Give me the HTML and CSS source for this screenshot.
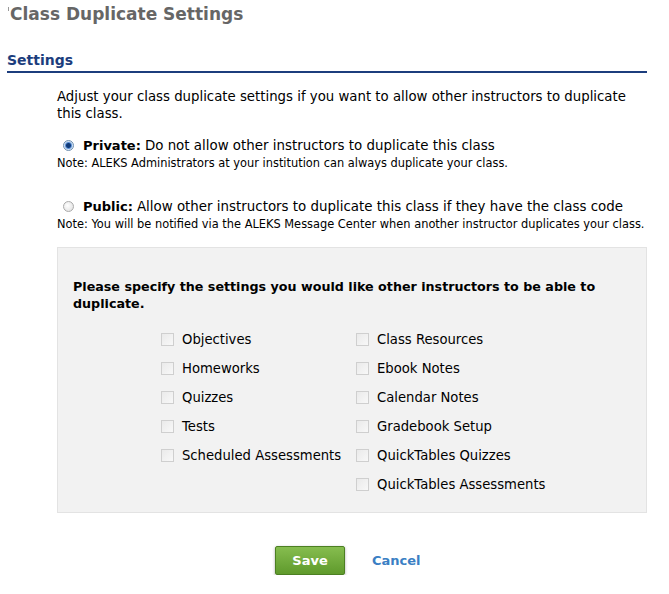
FILE: index.html
```html
<!DOCTYPE html>
<html>
<head>
<meta charset="utf-8">
<link rel="stylesheet" href="styles.css">
</head>
<body>
<div class="page">
  <h1 class="title"><span class="tick"></span>Class Duplicate Settings</h1>
  <h2 class="section">Settings</h2>
  <div class="content">
    <p class="intro">Adjust your class duplicate settings if you want to allow other instructors to duplicate this class.</p>
    <div class="option">
      <label class="opt-line"><span class="radio checked"></span><b>Private:</b> Do not allow other instructors to duplicate this class</label>
      <div class="note">Note: ALEKS Administrators at your institution can always duplicate your class.</div>
    </div>
    <div class="option public">
      <label class="opt-line"><span class="radio"></span><b>Public:</b> Allow other instructors to duplicate this class if they have the class code</label>
      <div class="note">Note: You will be notified via the ALEKS Message Center when another instructor duplicates your class.</div>
    </div>
    <div class="box">
      <p class="box-head">Please specify the settings you would like other instructors to be able to duplicate.</p>
      <div class="grid">
        <div class="col first">
          <div class="item"><span class="cb"></span>Objectives</div>
          <div class="item"><span class="cb"></span>Homeworks</div>
          <div class="item"><span class="cb"></span>Quizzes</div>
          <div class="item"><span class="cb"></span>Tests</div>
          <div class="item"><span class="cb"></span>Scheduled Assessments</div>
        </div>
        <div class="col">
          <div class="item"><span class="cb"></span>Class Resources</div>
          <div class="item"><span class="cb"></span>Ebook Notes</div>
          <div class="item"><span class="cb"></span>Calendar Notes</div>
          <div class="item"><span class="cb"></span>Gradebook Setup</div>
          <div class="item"><span class="cb"></span>QuickTables Quizzes</div>
          <div class="item"><span class="cb"></span>QuickTables Assessments</div>
        </div>
      </div>
    </div>
    <div class="actions">
      <button class="save">Save</button>
      <a class="cancel" href="#">Cancel</a>
    </div>
  </div>
</div>
</body>
</html>
```
FILE: styles.css
```css
html, body { margin: 0; padding: 0; background: #fff; }
body { font-family: "DejaVu Sans", Verdana, sans-serif; color: #000; }
.page { width: 669px; }
.title {
  margin: 0; padding: 3px 0 0 8px; height: 26px;
  font-size: 17px; font-weight: bold; color: #666; line-height: 22px;
  display: flex; align-items: flex-start;
}
.tick { width: 1px; height: 4px; background: #999; margin: 4px 1px 0 0; }
.section {
  margin: 22px 22px 0 7px; padding: 0 0 2px 0;
  font-size: 14px; font-weight: bold; color: #1c3d7d; line-height: 18px;
  border-bottom: 2px solid #1c3d7d;
}
.content { padding: 15px 22px 0 57px; }
.intro { margin: 0; font-size: 13.3px; line-height: 17px; }
.option { margin-top: 14px; }
.public { margin-top: 26px; }
.opt-line { display: flex; align-items: center; font-size: 13.4px; line-height: 19px; padding-left: 6px; }
.opt-line b { margin-right: 4px; font-size: 13px; }
.radio {
  width: 11px; height: 11px; border-radius: 50%; margin-right: 9px;
  border: 1px solid #aaa; background: radial-gradient(circle at 40% 40%, #fff, #ddd);
  box-sizing: border-box; display: inline-block; flex: none;
}
.radio.checked {
  border-color: #6d8fb0;
  background: radial-gradient(circle, #0f3a78 0 2px, #5b8fd6 3px, #cfe0f3 4px, #e8eef5 5px);
}
.note { font-size: 11.4px; line-height: 16px; }
.box {
  margin-top: 15px; background: #f2f2f2; border: 1px solid #e3e3e3;
  padding: 30px 0 13px 15px;
}
.box-head { margin: 0 20px 0 0; font-size: 12.7px; font-weight: bold; line-height: 17px; }
.grid { display: flex; margin-top: 13px; padding-left: 88px; }
.col { display: flex; flex-direction: column; }
.col.first { width: 195px; }
.item { display: flex; align-items: center; height: 29px; font-size: 13.2px; color: #000; }
.cb {
  width: 13px; height: 13px; box-sizing: border-box; border: 1px solid #cfcfcf;
  background: linear-gradient(135deg, #eaeaea, #f8f8f8); margin-right: 8px; flex: none;
}
.actions { display: flex; align-items: center; padding: 33px 0 0 218px; }
.save {
  width: 70px; height: 29px; font-family: inherit; font-size: 13px; font-weight: bold; color: #fff;
  background: linear-gradient(#86bd4f, #5f9a2c); border: 1px solid #4c7f22; border-radius: 2px;
  box-shadow: 0 1px 3px rgba(0,0,0,0.35); padding: 0;
}
.cancel { margin-left: 27px; font-size: 13px; font-weight: bold; color: #3b7fc4; text-decoration: none; }
```
